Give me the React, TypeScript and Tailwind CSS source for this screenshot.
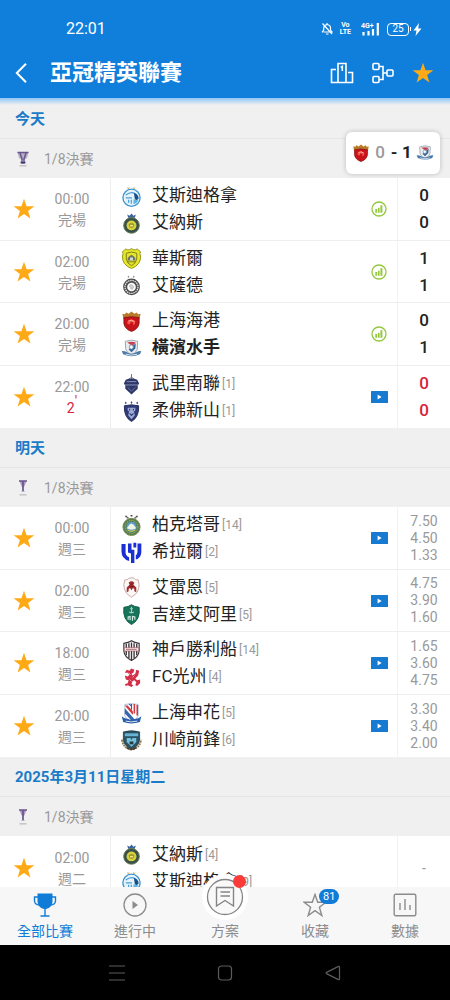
import React from "react";

type CrestName =
  | "esteghlal"
  | "nassr"
  | "wasl"
  | "sadd"
  | "port"
  | "marinos"
  | "buriram"
  | "johor"
  | "pakhtakor"
  | "hilal"
  | "rayyan"
  | "ahli"
  | "kobe"
  | "gwangju"
  | "shenhua"
  | "kawasaki";

type Team = { name: string; crest: CrestName; rank?: number; bold?: boolean };

type Match = {
  time: string;
  status: string;
  live?: boolean;
  home: Team;
  away: Team;
  media?: "stats" | "video";
  score?: [number, number];
  odds?: string[];
};

type Section = { title: string; cup: "large" | "small"; matches: Match[] };

const sections: Section[] = [
  {
    title: "今天",
    cup: "large",
    matches: [
      {
        time: "00:00",
        status: "完場",
        home: { name: "艾斯迪格拿", crest: "esteghlal" },
        away: { name: "艾納斯", crest: "nassr" },
        media: "stats",
        score: [0, 0],
      },
      {
        time: "02:00",
        status: "完場",
        home: { name: "華斯爾", crest: "wasl" },
        away: { name: "艾薩德", crest: "sadd" },
        media: "stats",
        score: [1, 1],
      },
      {
        time: "20:00",
        status: "完場",
        home: { name: "上海海港", crest: "port" },
        away: { name: "橫濱水手", crest: "marinos", bold: true },
        media: "stats",
        score: [0, 1],
      },
      {
        time: "22:00",
        status: "2",
        live: true,
        home: { name: "武里南聯", crest: "buriram", rank: 1 },
        away: { name: "柔佛新山", crest: "johor", rank: 1 },
        media: "video",
        score: [0, 0],
      },
    ],
  },
  {
    title: "明天",
    cup: "small",
    matches: [
      {
        time: "00:00",
        status: "週三",
        home: { name: "柏克塔哥", crest: "pakhtakor", rank: 14 },
        away: { name: "希拉爾", crest: "hilal", rank: 2 },
        media: "video",
        odds: ["7.50", "4.50", "1.33"],
      },
      {
        time: "02:00",
        status: "週三",
        home: { name: "艾雷恩", crest: "rayyan", rank: 5 },
        away: { name: "吉達艾阿里", crest: "ahli", rank: 5 },
        media: "video",
        odds: ["4.75", "3.90", "1.60"],
      },
      {
        time: "18:00",
        status: "週三",
        home: { name: "神戶勝利船", crest: "kobe", rank: 14 },
        away: { name: "FC光州", crest: "gwangju", rank: 4 },
        media: "video",
        odds: ["1.65", "3.60", "4.75"],
      },
      {
        time: "20:00",
        status: "週三",
        home: { name: "上海申花", crest: "shenhua", rank: 5 },
        away: { name: "川崎前鋒", crest: "kawasaki", rank: 6 },
        media: "video",
        odds: ["3.30", "3.40", "2.00"],
      },
    ],
  },
  {
    title: "2025年3月11日星期二",
    cup: "small",
    matches: [
      {
        time: "02:00",
        status: "週二",
        home: { name: "艾納斯", crest: "nassr", rank: 4 },
        away: { name: "艾斯迪格拿", crest: "esteghlal", rank: 9 },
      },
    ],
  },
];

const crests: Record<CrestName, React.ReactNode> = {
  esteghlal: (
    <>
      <path d="M7 .8 8 2l1.2-.6L8.600 3H6.800zM13 .8 14 2l1.200-.6-.6 1.600h-1.800z" fill="#c9a64a" />
      <circle cx="11" cy="12.300" r="9" fill="#e6f3fb" stroke="#3c95cf" strokeWidth="1.400" />
      <path d="M5 9.500q5-4 9-2M5 12.500h6.500M8 17.500v-3M10.800 18.500v-4" stroke="#4a9fd6" strokeWidth="1.300" fill="none" />
      <path d="M13.500 7q4.500 1 5 6L16.500 15l-2-1z" fill="#14508c" />
      <path d="M13 14v5q4-1 5-4z" fill="#5fb4e2" />
    </>
  ),
  nassr: (
    <>
      <path d="M6.500 1.500 9 3l2-2.500L13 3l2.500-1.500L14.500 5h-7z" fill="#3a64a0" />
      <circle cx="11" cy="13" r="8.200" fill="#36504a" stroke="#68794f" strokeWidth="1" />
      <circle cx="11" cy="13" r="5.200" fill="#d8cf3c" />
      <path d="M8 12q3-3 6 0l-1 3q-2 1.500-4 0z" fill="#9b9c2e" />
      <path d="M9.500 12.500h3v1.500h-3z" fill="#f3eb7d" />
    </>
  ),
  wasl: (
    <>
      <path d="M11 .6q2 1.800 4 1.300l2-.9 3.500 3q-1.500 2 0 4.500.5 9-9.500 13Q1 17.500 1.500 8.500q1.500-2.500 0-4.500L5 1l2 .9q2 .5 4-1.300z" fill="#e8e62a" stroke="#8f9411" strokeWidth="1" />
      <path d="M5.500 5.500q5.500-2.500 11 0v6q-1 5-5.500 7-4.500-2-5.500-7z" fill="none" stroke="#777c19" strokeWidth="1" />
      <path d="M7 13v-2.500l2-2 2-1.500 2 1.500 2 2V13z" fill="#6d7568" />
      <path d="M9.500 13v-3h3v3z" fill="#d9dedb" />
      <path d="M7 14.500h8" stroke="#777c19" />
    </>
  ),
  sadd: (
    <>
      <path d="m8 .5.8 1.700-1 .6-1-.6zM13.500.500l.8 1.700-1 .6-1-.6z" fill="#888" />
      <circle cx="11" cy="12.500" r="8.800" fill="#4f4f4f" />
      <circle cx="11" cy="12.500" r="6.800" fill="none" stroke="#eee" strokeWidth="1.300" strokeDasharray="1.500 .8" />
      <circle cx="11" cy="12.500" r="4.500" fill="#fff" />
      <path d="M8.500 11.500 10 10l2 .5 1.500 2-1 2-2 .5-.5-1.500z" fill="#cfcfcf" stroke="#999" strokeWidth=".5" />
    </>
  ),
  port: (
    <>
      <path d="M1.500 3 4 3.500 5.500 1.500 8 3l3-2.500L14 3l2.500-1.500L18 3.500l2.500-.5-1 5h-17z" fill="#b97a2a" />
      <path d="M3 7q8-2 16 0v6q-1 6-8 8.500Q4 19 3 13z" fill="#c8131b" stroke="#7d1714" strokeWidth=".8" />
      <path d="M6.500 12q1-4 5-3l3.500 1.500-.5 3.500-2 1 .5-3-3-.5-.5 2.500q-3 0-3-2z" fill="#f5564e" />
      <path d="M8 10.500q3-2 6 .500" stroke="#ffd0b0" strokeWidth=".8" fill="none" />
    </>
  ),
  marinos: (
    <>
      <path d="M4.500 3.500q6.500-2.500 13 0l-.5 8.500q-1.500 4-6 5.500Q6.500 16 5 12z" fill="#e8edf0" stroke="#9aa5ae" strokeWidth="1" />
      <path d="M6.500 4.700q4.500-1.500 9 0L12 8.500z" fill="#c94250" />
      <path d="m8 12 3.500-3 4-3.500-.5 5.500-4 4z" fill="#356397" />
      <circle cx="10.800" cy="9.500" r="2.200" fill="#f5f5f5" stroke="#6a88ad" strokeWidth=".8" />
      <path d="M.8 14q2-1 4.500.5 5.500 4 11.500 0 2.500-1.500 4.500-.5l-1.500 3q-8.500 4-17.500 0z" fill="#4b7aa8" />
      <path d="M5 17q6 2 12 0" stroke="#dfe8ef" strokeWidth="1" fill="none" />
    </>
  ),
  buriram: (
    <>
      <path d="M11 0v5M8.500 5 11 3.500 13.500 5" stroke="#66708a" strokeWidth="1" fill="none" />
      <path d="M5 6q6-2.500 12 0l2 4-1.500 2v3.500l-6.500 6-6.500-6V12L3 10z" fill="#2e3768" />
      <path d="M4 11.500h14M6 8h10" stroke="#8e97bd" strokeWidth="1" />
      <path d="m7 14 4 4 4-4" stroke="#707ba8" strokeWidth="1" fill="none" />
    </>
  ),
  johor: (
    <>
      <path d="m5 .5 1 1.500-1 1.500L4 2zM11 .2l1 1.500-1 1.500-1-1.500zM17 .5l1 1.500-1 1.500L16 2z" fill="#343e7c" />
      <path d="M3.500 5 11 4l7.500 1q.5 12-7.500 16.500Q3 17 3.500 5z" fill="#303a76" stroke="#242c5c" strokeWidth="1" />
      <path d="M7 7h8v3l-1.500 1 1 4-3.500 4-3.500-4 1-4L7 10z" fill="#9fabd6" />
      <path d="M9 8v2M13 8v2M9 13l2 2 2-2" stroke="#303a76" strokeWidth="1.200" fill="none" />
    </>
  ),
  pakhtakor: (
    <>
      <path d="M4.500 1.500h2M10 .8h2M15.500 1.500h2M6 3h2M14 3h2" stroke="#4b504a" strokeWidth="1.500" />
      <circle cx="11" cy="12.500" r="9" fill="#557d51" stroke="#7d8c4a" strokeWidth="1" />
      <circle cx="11" cy="12.500" r="6.700" fill="none" stroke="#b8c170" strokeWidth="1" strokeDasharray="1 1" />
      <circle cx="11" cy="12.500" r="5.300" fill="#5c9bc9" />
      <path d="m6 14 3-4 2-1 2 1 3 4q-5 3-10 0z" fill="#eef3e2" />
      <path d="M7 16q4 2.500 8 0" stroke="#d9c93f" strokeWidth="1" fill="none" />
    </>
  ),
  hilal: (
    <>
      <path d="M.5 2h4.300v9q0 3.500 3.700 5v4Q.5 17.500.5 10z" fill="#1b2fd3" />
      <path d="M7.300 1.500h3.700v6.500h3v14h-3.500v-10l-3.200-1z" fill="#1b2fd3" />
      <path d="M13 .8h3v5h-3zM17.300 1.500h4v9q0 5-4.300 7.500h-1.500V14q1.800-1 1.800-4z" fill="#1b2fd3" />
    </>
  ),
  rayyan: (
    <>
      <path d="M4 3q3 .5 4-1.500Q11 0 14 1.500 15 3.500 18 3l1 5q0 9-8 13Q3 17 3 8z" fill="#faf7f5" stroke="#c8a8a4" strokeWidth="1" />
      <path d="M8 6q3-3 6 0l-1 2 3 3v5l-2-1v-2.500l-1.500-1L11 14l-1.500-2.500-1.500 1V15l-2 1v-5l3-3z" fill="#a52a2c" />
      <path d="M9 10h4M10 7.500h2" stroke="#5b2526" strokeWidth="1" />
    </>
  ),
  ahli: (
    <>
      <path d="M3 3.500Q8 3 11 .8 14 3 19 3.500q1.500 13-8 18-9.500-5-8-18z" fill="#17745a" stroke="#0f5a45" strokeWidth="1" />
      <path d="M11 3v7M9.500 5h3M8.500 8.500q2.500 1.500 5 0" stroke="#a3d0c3" strokeWidth="1.200" fill="none" />
      <path d="M7.500 16.500v-3l2-.5v4M12 17.500v-4.500l2.500.5v3" stroke="#d8efe8" strokeWidth="1.200" fill="none" />
    </>
  ),
  kobe: (
    <>
      <path d="M3 3.500Q8 3 11 .8 14 3 19 3.500v8q-.5 6-8 10-7.500-4-8-10z" fill="#fff" stroke="#3a3236" strokeWidth="1.200" />
      <path d="M5.500 4v12M8.300 3.500v15.500M11 2.500V21M13.700 3.500v15.500M16.500 4v12" stroke="#3a3236" strokeWidth="1.400" />
      <path d="M3.500 8h15v3.500h-15z" fill="#f5eeee" stroke="#9b4b55" strokeWidth=".6" />
      <path d="M5.500 9.800h11" stroke="#ad5a63" strokeWidth="1.300" strokeDasharray="1.500 .6" />
    </>
  ),
  gwangju: (
    <>
      <path d="M4 6 6 3l3 1 1.500-2.500L14 3l-1 3-2 1 1 2 3-2 1-4 3 1-1 5-3 3 2 2 3-1v4l-3 3-2-1 1-3-2-2-2 1-1 3 2 1-2 2-4-2-2 1-1-2 3-1 1-3-3-1-1-4 3 1 2-2-2-2z" fill="#d32f49" />
      <path d="m8 6 2 2M12 11l2-2M9 13l2 2" stroke="#f6b0b9" strokeWidth=".9" />
    </>
  ),
  shenhua: (
    <>
      <path d="M4 1.500q7-1.500 14 0v12q-1 4-7 6-6-2-7-6z" fill="#fff" stroke="#8ba4c4" strokeWidth=".7" />
      <path d="M4 5.500 16 19l-3 1.500L4 11z" fill="#2d60a8" opacity=".95" />
      <path d="M4 2.500h3L12.500 9v3.500z" fill="#cf3940" />
      <path d="M14 1v10M17 2v11" stroke="#cf3940" strokeWidth="1.600" />
      <path d="M11 1v6M8.500 1l2 2" stroke="#2d60a8" strokeWidth="1.200" />
      <path d="M.8 14q3 3 6 2.500 4 2 8.500 0 3 .5 6-2.500l-1.500 6q-9 3-17.500 0z" fill="#2b5fa9" />
      <path d="M5 19q6 1.500 12 0" stroke="#dce7f4" strokeWidth="1" fill="none" />
    </>
  ),
  kawasaki: (
    <>
      <path d="M2.500 2Q11-.5 19.500 2v9q-1 6-8.500 9-7.500-3-8.500-9z" fill="#2c5363" stroke="#1f333d" strokeWidth=".8" />
      <path d="M4 3.500h14v3H4z" fill="#67b4d4" />
      <path d="M6 8.500h4l1 2 1-2h4v4l-5 5-5-5z" fill="#76c0dd" />
      <path d="M9 12h4v3H9z" fill="#283b44" />
      <path d="M1 10q1 9 10 10.500Q20 19 21 10" stroke="#8f7d56" strokeWidth="2" strokeDasharray="2 .8" fill="none" />
      <path d="M6 18.500q5 3.500 10 0" stroke="#37352c" strokeWidth="1.500" fill="none" />
    </>
  ),
};

const Crest = ({ name, className }: { name: CrestName; className: string }) => (
  <svg viewBox="0 0 22 22" className={className} aria-hidden="true">
    {crests[name]}
  </svg>
);

const Star = ({ className }: { className: string }) => (
  <svg viewBox="0 0 24 24" className={className} aria-hidden="true">
    <path d="M12 .8 14.800 9H23.300L16.500 14.100 19 22.400 12 17.400 5 22.400 7.500 14.100.7 9H9.200z" fill="#feaa16" />
  </svg>
);

const StatsIcon = () => (
  <svg viewBox="0 0 16 16" className="size-4" aria-hidden="true">
    <circle cx="8" cy="8" r="7" fill="#fff" stroke="#93c83f" strokeWidth="1.300" />
    <path d="M4.300 8h1.900v3.700H4.300zM7 6.800h1.600v4.900H7zM9.400 4.300h2v7.400h-2z" fill="#93c83f" />
  </svg>
);

const VideoIcon = () => (
  <svg viewBox="0 0 17 12" className="h-3 w-[17px]" aria-hidden="true">
    <rect width="17" height="12" rx=".6" fill="#157ad0" />
    <path d="M6.600 3.500v5l4-2.500z" fill="#fff" />
  </svg>
);

const CupIcon = ({ size }: { size: "large" | "small" }) => (
  <svg viewBox="0 0 16 18" className="h-[18px] w-4" aria-hidden="true">
    {size === "large" ? (
      <>
        <path d="M2.500 2.500h11L12 8 9 10H7L4 8z" fill="#b8afc8" />
        <path d="M2.500 2.500h11M5 3l2 6v4h2V9l2-6" stroke="#67588c" strokeWidth="1.500" fill="none" />
        <path d="M5.500 12.500h5" stroke="#4b3b70" strokeWidth="1.500" />
      </>
    ) : (
      <>
        <path d="M4.500 2h7l-1.500 4-1 2H7L6 6z" fill="#a99abd" />
        <path d="M4 2h8M8 2.500V12" stroke="#6a548f" strokeWidth="1.700" />
        <path d="M6.500 12.500h3" stroke="#b8b0c4" />
      </>
    )}
    <path d="M4.500 15.800h7" stroke="#c3c3c3" strokeWidth="1.500" />
  </svg>
);

const StatusBar = () => (
  <div className="flex items-center justify-between pt-[19px] pr-[28px] pl-[66px] text-white">
    <span className="text-base leading-5">22:01</span>
    <div className="flex h-5 items-center">
      <svg viewBox="0 0 12 14" className="mr-[7px] h-3.5 w-3" fill="none" stroke="currentColor" aria-hidden="true">
        <path d="M2.500 10h8.500L9.500 8V6q0-3-3.500-3.500Q3 3 2.700 6v2L1 10.300M5 12h2.500M1.500 1.500l9.500 10.500M6 1v1.500" strokeWidth="1.200" />
      </svg>
      <span className="mr-[10px] flex flex-col text-center text-[7px] leading-[7px] font-bold">
        <span>Vo</span>
        <span>LTE</span>
      </span>
      <svg viewBox="0 0 19 14" className="mr-[7px] h-3.5 w-[19px]" aria-hidden="true">
        <text x="0" y="6" fontSize="7" fontWeight="700" fill="currentColor">
          4G+
        </text>
        <path d="M2.500 10v3.500M7.500 9v4.500M12 7v6.500M16.800 1v12.500" stroke="currentColor" strokeWidth="2.200" />
      </svg>
      <span className="flex h-[13px] w-[22px] items-center justify-center rounded border border-white text-[10px] leading-3">
        25
      </span>
      <span className="ml-px h-1 w-px bg-white" />
      <svg viewBox="0 0 9 13" className="ml-[2px] h-[13px] w-[9px]" fill="currentColor" aria-hidden="true">
        <path d="M6 0 .5 7.500h3L2.500 13 8.500 5.500H5.200z" />
      </svg>
    </div>
  </div>
);

const TitleBar = () => (
  <div className="flex items-center pt-[18px] pr-4 pb-[9px] pl-3">
    <button type="button" aria-label="返回" className="flex w-[38px] items-center pl-[3px]">
      <svg viewBox="0 0 12 20" className="h-5 w-3" fill="none" stroke="#fff" strokeWidth="2" aria-hidden="true">
        <path d="M11 .8 1.800 10 11 19.200" />
      </svg>
    </button>
    <h1 className="flex-1 text-[22px] leading-8 font-bold text-white">亞冠精英聯賽</h1>
    <button type="button" aria-label="積分榜" className="mr-[18px]">
      <svg viewBox="0 0 24 22" className="h-[22px] w-6" fill="none" stroke="#fff" strokeWidth="1.600" aria-hidden="true">
        <path d="M8 20.500V1.500h8v19M6 7.500H1.500v13h21v-10H18" />
        <path d="M10.800 5.500 12.300 4.500v4.500" />
      </svg>
    </button>
    <button type="button" aria-label="賽程圖" className="mr-[18px]">
      <svg viewBox="0 0 22 22" className="size-[22px]" fill="none" stroke="#fff" strokeWidth="1.600" aria-hidden="true">
        <rect x="1" y="1.500" width="6" height="6" rx="1" />
        <rect x="1" y="14.500" width="6" height="6" rx="1" />
        <rect x="15" y="8" width="6" height="6" rx="1" />
        <path d="M7 4.500h4v13H7M11 11h4" />
      </svg>
    </button>
    <button type="button" aria-label="收藏賽事">
      <Star className="size-[22px]" />
    </button>
  </div>
);

const ScoreToast = () => (
  <button
    type="button"
    className="absolute top-[34px] right-2.5 flex h-[42px] items-center rounded-md bg-white px-1.5 text-[17px] font-bold text-[#222] shadow-[0_0_5px_rgba(0,0,0,0.22)]"
  >
    <Crest name="port" className="size-[18px]" />
    <span className="w-5 text-center font-medium text-[#999]">0</span>
    <span className="w-2 text-center">-</span>
    <span className="w-[18px] text-center">1</span>
    <Crest name="marinos" className="size-[18px]" />
  </button>
);

const TeamLine = ({ team }: { team: Team }) => (
  <div className="flex h-[27px] items-center">
    <Crest name={team.crest} className="size-[21px]" />
    <span className={`ml-[10px] text-[17px] ${team.bold ? "font-bold" : ""}`}>{team.name}</span>
    {team.rank && <span className="ml-[2px] text-xs text-[#999]">[{team.rank}]</span>}
  </div>
);

const MatchRow = ({ match }: { match: Match }) => (
  <li className="flex items-stretch border-b border-[#eee] odd:h-[63px] even:h-[62px] last:border-b-0">
    <button type="button" aria-label="收藏" className="flex w-12 items-center justify-center">
      <Star className="size-[22px]" />
    </button>
    <div className="flex w-[63px] flex-col items-center justify-center border-r border-[#eee] pt-[2px] pr-[14px] text-sm leading-[21px] text-[#999]">
      <span>{match.time}</span>
      {match.live ? (
        <span className="text-[#d5243c]">
          {match.status}
          <sup className="text-sm leading-none">'</sup>
        </span>
      ) : (
        <span>{match.status}</span>
      )}
    </div>
    <div className="flex flex-1 flex-col justify-center pt-px pl-[10px] text-[#222]">
      <TeamLine team={match.home} />
      <TeamLine team={match.away} />
    </div>
    <div className="flex w-9 items-center justify-center">
      {match.media === "stats" && <StatsIcon />}
      {match.media === "video" && <VideoIcon />}
    </div>
    <div className="flex w-[53px] flex-col items-center justify-center border-l border-[#f2f2f2]">
      {match.score?.map((goals, i) => (
        <span
          key={i}
          className={`text-[17px] leading-[27px] font-medium ${match.live ? "text-[#d5243c]" : "text-[#222]"}`}
        >
          {goals}
        </span>
      ))}
      {match.odds?.map((odd) => (
        <span key={odd} className="text-sm leading-[17px] text-[#999]">
          {odd}
        </span>
      ))}
      {!match.score && !match.odds && <span className="text-sm text-[#999]">-</span>}
    </div>
  </li>
);

const MatchSection = ({ section }: { section: Section }) => (
  <section>
    <h2 className="h-10 border-b border-[#e6e6e6] pl-[15px] text-[15px] leading-[41px] font-bold text-[#1a7cc9]">
      {section.title}
    </h2>
    <h3 className="flex h-[39px] items-center pl-[15px] text-sm text-[#999]">
      <CupIcon size={section.cup} />
      <span className="ml-[13px]">1/8決賽</span>
    </h3>
    <ul className="bg-white">
      {section.matches.map((match) => (
        <MatchRow key={match.time} match={match} />
      ))}
    </ul>
  </section>
);

const TabBar = () => (
  <nav className="grid h-[58px] shrink-0 grid-cols-5 bg-[#f7f7f7] text-sm leading-5 text-[#8c8c8c]">
    <a href="#all" aria-current="page" className="flex flex-col items-center gap-1 pt-[6px] text-[#107cd8]">
      <svg viewBox="0 0 24 24" className="size-6" fill="none" stroke="currentColor" aria-hidden="true">
        <path d="M4.500.5h15v8q0 6-6.500 7.500h-2Q4.500 14.500 4.500 8.500z" fill="currentColor" stroke="none" />
        <path d="M5 4H1.500v4q.5 4 5 4M19 4h3.500v4q-.5 4-5 4M12 15v8M7.500 23h9" strokeWidth="1.400" />
      </svg>
      <span>全部比賽</span>
    </a>
    <a href="#live" className="flex flex-col items-center gap-1 pt-[6px]">
      <svg viewBox="0 0 24 24" className="size-6" aria-hidden="true">
        <circle cx="12" cy="12" r="11" fill="none" stroke="currentColor" strokeWidth="1.300" />
        <path d="M9.500 8v8l5.500-4z" fill="currentColor" />
      </svg>
      <span>進行中</span>
    </a>
    <a href="#plans" className="relative flex flex-col items-center justify-end pb-[4px]">
      <svg
        viewBox="0 0 38 38"
        className="absolute -top-[9px] size-[38px] rounded-full bg-white ring-4 ring-white"
        fill="none"
        stroke="#858585"
        aria-hidden="true"
      >
        <circle cx="19" cy="19" r="17.500" fill="#f9f9f9" strokeWidth="1.300" />
        <path d="M10.500 9.500h17v18.500L19 22.500 10.500 28zM14.500 14h9.500M14.500 18h9.500" strokeWidth="1.400" />
      </svg>
      <span className="absolute -top-3 left-1/2 ml-2 size-[13px] rounded-full bg-[#fb3a3a]" />
      <span className="relative">方案</span>
    </a>
    <a href="#favourites" className="relative flex flex-col items-center gap-1 pt-[6px]">
      <svg viewBox="0 0 24 24" className="size-6" fill="none" stroke="currentColor" strokeWidth="1.400" aria-hidden="true">
        <path d="m12 1.500 2.700 7.700h8.200l-6.500 5.100 2.400 8.200L12 17.700l-6.800 4.800 2.400-8.200L1.100 9.200h8.200z" />
      </svg>
      <span className="absolute top-[2px] left-1/2 ml-1 rounded-full bg-[#107cd8] px-1 text-[11px] leading-[15px] text-white">
        81
      </span>
      <span>收藏</span>
    </a>
    <a href="#data" className="flex flex-col items-center gap-1 pt-[6px]">
      <svg viewBox="0 0 24 24" className="size-6" fill="none" stroke="currentColor" strokeWidth="1.400" aria-hidden="true">
        <rect x="1.200" y="1.200" width="21.600" height="21.600" rx="1.500" />
        <path d="M7 10v7M12 6v11M17 12v5" />
      </svg>
      <span>數據</span>
    </a>
  </nav>
);

const SystemBar = () => (
  <div className="flex h-[55px] shrink-0 items-center justify-center gap-[92px] bg-black text-[#5c5c5c]">
    <button type="button" aria-label="選單">
      <svg viewBox="0 0 16 16" className="size-4" stroke="currentColor" strokeWidth="1.200" aria-hidden="true">
        <path d="M0 1h16M0 8h16M0 15h16" />
      </svg>
    </button>
    <button type="button" aria-label="主畫面">
      <svg viewBox="0 0 16 16" className="size-4" fill="none" stroke="currentColor" strokeWidth="1.200" aria-hidden="true">
        <rect x="1.500" y="1" width="13" height="14" rx="3" />
      </svg>
    </button>
    <button type="button" aria-label="上一頁">
      <svg viewBox="0 0 16 16" className="size-4" fill="none" stroke="currentColor" strokeWidth="1.200" aria-hidden="true">
        <path d="M14.500 2v12q0 1-1 .6L1.500 8.600q-1-.6 0-1.200l12-6q1-.4 1 .6z" />
      </svg>
    </button>
  </div>
);

const App = () => {
  return (
    <div className="flex h-screen flex-col bg-[#f0f0f0] font-[Roboto,'Noto_Sans_CJK_TC',sans-serif]">
      <header className="shrink-0 bg-[#107fdc]">
        <StatusBar />
        <TitleBar />
      </header>
      <div className="relative flex min-h-0 flex-1 flex-col">
        <main className="flex-1 overflow-y-auto bg-linear-to-b from-[#8cc4f5] to-[#f0f0f0] to-[7px] pt-px [scrollbar-width:none]">
          {sections.map((section) => (
            <MatchSection key={section.title} section={section} />
          ))}
        </main>
        <ScoreToast />
      </div>
      <TabBar />
      <SystemBar />
    </div>
  );
};

export default App;
